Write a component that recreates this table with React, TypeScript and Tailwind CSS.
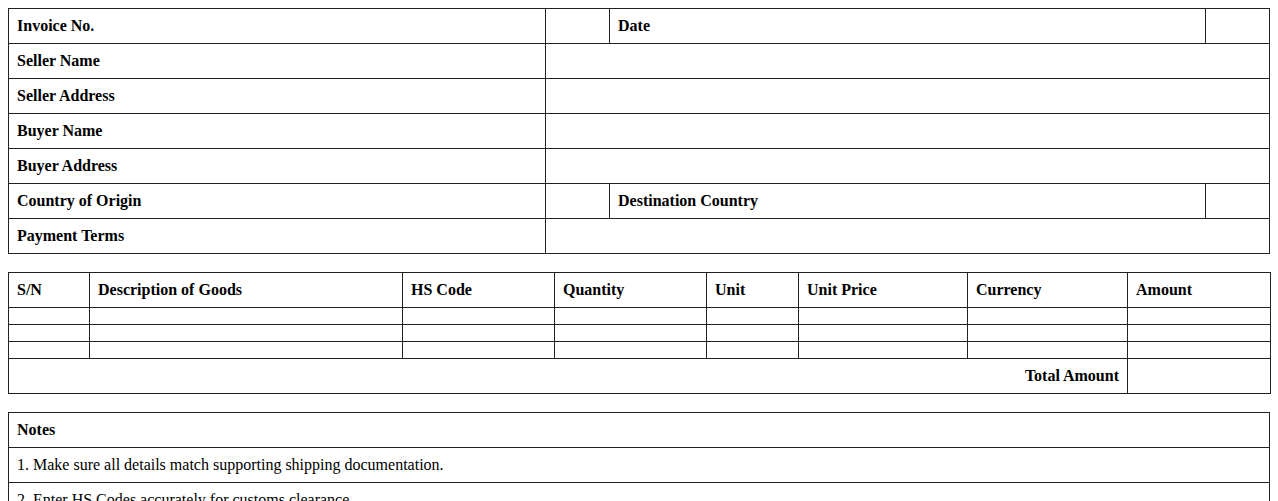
const cell = 'border border-[#222] px-2 h-[35px] align-middle';
const head = `${cell} font-bold text-left`;

const infoRows: { label: string; right?: string }[] = [
  { label: 'Invoice No.', right: 'Date' },
  { label: 'Seller Name' },
  { label: 'Seller Address' },
  { label: 'Buyer Name' },
  { label: 'Buyer Address' },
  { label: 'Country of Origin', right: 'Destination Country' },
  { label: 'Payment Terms' },
];

const goodsCols = [
  { name: 'S/N', w: 'w-[81px]' },
  { name: 'Description of Goods', w: 'w-[313px]' },
  { name: 'HS Code', w: 'w-[152px]' },
  { name: 'Quantity', w: 'w-[152px]' },
  { name: 'Unit', w: 'w-[92px]' },
  { name: 'Unit Price', w: 'w-[169px]' },
  { name: 'Currency', w: 'w-[160px]' },
  { name: 'Amount', w: 'w-[143px]' },
];

const notes = [
  '1. Make sure all details match supporting shipping documentation.',
  '2. Enter HS Codes accurately for customs clearance.',
];

export default function App() {
  return (
    <div className="min-h-screen bg-white p-2 text-[16px] leading-[18px] text-black font-['Liberation_Serif','Times_New_Roman',serif]">
      {/* Invoice header details */}
      <table className="w-full table-fixed border-collapse">
        <colgroup>
          <col className="w-[537px]" />
          <col className="w-[64px]" />
          <col className="w-[596px]" />
          <col />
        </colgroup>
        <tbody>
          {infoRows.map((r) =>
            r.right ? (
              <tr key={r.label}>
                <td className={head}>{r.label}</td>
                <td className={cell}></td>
                <td className={head}>{r.right}</td>
                <td className={cell}></td>
              </tr>
            ) : (
              <tr key={r.label}>
                <td className={head}>{r.label}</td>
                <td className={cell} colSpan={3}></td>
              </tr>
            )
          )}
        </tbody>
      </table>

      {/* Goods */}
      <table className="mt-[18px] w-full table-fixed border-collapse">
        <colgroup>
          {goodsCols.map((c) => (
            <col key={c.name} className={c.w} />
          ))}
        </colgroup>
        <thead>
          <tr>
            {goodsCols.map((c) => (
              <th key={c.name} className={head}>
                {c.name}
              </th>
            ))}
          </tr>
        </thead>
        <tbody>
          {[0, 1, 2].map((i) => (
            <tr key={i}>
              {goodsCols.map((c) => (
                <td key={c.name} className="border border-[#222] h-[17px] p-0"></td>
              ))}
            </tr>
          ))}
          <tr>
            <td className={`${cell} text-right font-bold`} colSpan={7}>
              Total Amount
            </td>
            <td className={cell}></td>
          </tr>
        </tbody>
      </table>

      {/* Notes */}
      <table className="mt-[18px] w-full border-collapse">
        <tbody>
          <tr>
            <td className={head}>Notes</td>
          </tr>
          {notes.map((n) => (
            <tr key={n}>
              <td className={cell}>{n}</td>
            </tr>
          ))}
        </tbody>
      </table>
    </div>
  );
}
